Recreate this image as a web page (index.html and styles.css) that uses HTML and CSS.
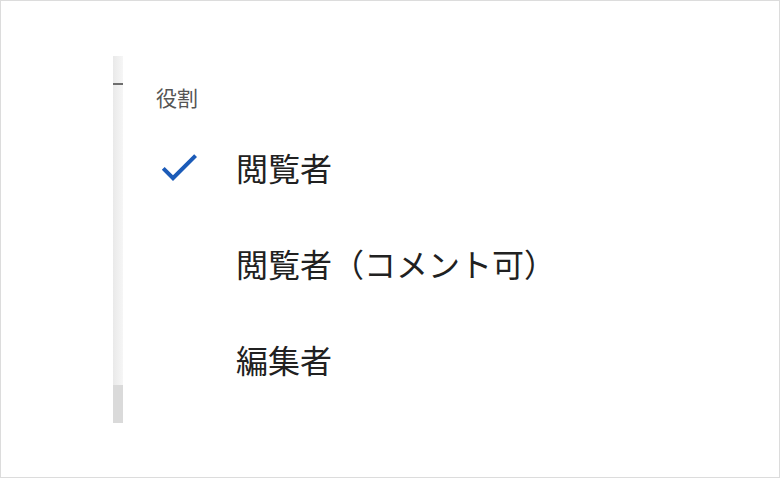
FILE: index.html
```html
<!DOCTYPE html>
<html lang="ja">
<head>
  <meta charset="UTF-8" />
  <title>役割</title>
  <link rel="stylesheet" href="styles.css">
</head>
<body>

  <div class="frame">
    <div class="panel">
      <div class="edge">
        <div class="edge-mark"></div>
        <div class="edge-bottom"></div>
      </div>

      <div class="menu">
        <div class="menu-label">役割</div>

        <div class="menu-item">
          <span class="menu-icon">
            <svg width="48" height="48" viewBox="0 0 24 24">
              <path d="M9 16.17L4.83 12l-1.42 1.41L9 19 21 7l-1.41-1.41z" fill="#1b5bb8"/>
            </svg>
          </span>
          <span class="menu-text">閲覧者</span>
        </div>

        <div class="menu-item">
          <span class="menu-icon"></span>
          <span class="menu-text">閲覧者（コメント可）</span>
        </div>

        <div class="menu-item">
          <span class="menu-icon"></span>
          <span class="menu-text">編集者</span>
        </div>
      </div>
    </div>
  </div>

</body>
</html>
```

FILE: styles.css
```css
body {
  margin: 0;
  font-family: "Noto Sans CJK JP", "Noto Sans", sans-serif;
  background: #fff;
  color: #212121;
}

.frame {
  width: 780px;
  height: 478px;
  box-sizing: border-box;
  border: 1px solid #dcdcdc;
  padding: 55px 0 0 112px;
}

.panel {
  display: flex;
}

.edge {
  width: 10px;
  height: 367px;
  display: flex;
  flex-direction: column;
  background: linear-gradient(to right, #e9e9e9, #f6f6f6);
}

.edge-mark {
  height: 2px;
  margin-top: 27px;
  background: #6e6e6e;
}

.edge-bottom {
  margin-top: auto;
  height: 38px;
  background: #dadada;
}

.menu {
  padding: 27px 0 0 33px;
}

.menu-label {
  font-size: 21px;
  line-height: 28px;
  color: #555;
  margin-bottom: 8px;
}

.menu-item {
  display: flex;
  align-items: center;
  height: 96px;
}

.menu-icon {
  width: 80px;
  height: 48px;
  display: flex;
  align-items: center;
}

.menu-icon svg {
  margin-left: -1px;
}

.menu-text {
  font-size: 32px;
  color: #212121;
}
```
